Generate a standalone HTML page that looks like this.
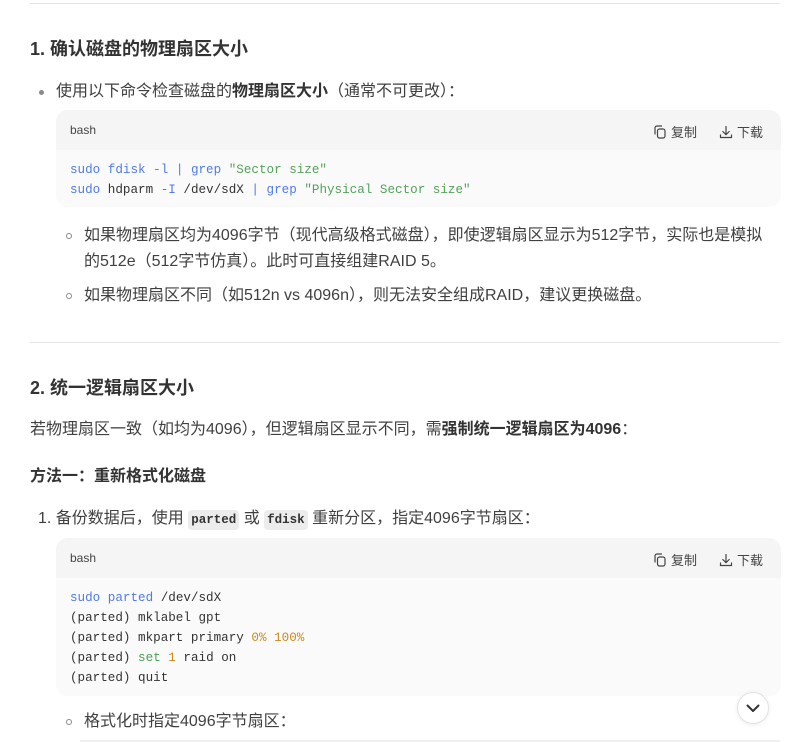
<!DOCTYPE html>
<html><head><meta charset="utf-8"><style>
*{margin:0;padding:0;box-sizing:border-box}
body{width:792px;height:742px;overflow:hidden;background:#fff;font-family:"Liberation Sans","Noto Sans CJK SC",sans-serif;color:#404040;font-size:16px;position:relative}
.a{position:absolute;white-space:nowrap;line-height:20px}
.hr{position:absolute;left:30px;width:750px;height:1px;background:#e5e5e5}
h3{position:absolute;left:30px;font-size:18px;font-weight:bold;color:#333;line-height:24px;white-space:nowrap}
b{font-weight:bold;color:#333}
.dot{position:absolute;width:5px;height:5px;border-radius:50%;background:#8a8a8a}
.circ{position:absolute;width:6px;height:6px;border-radius:50%;border:1px solid #888}
.cb{position:absolute;left:56px;width:725px;border-radius:12px;overflow:hidden;background:#fafafa}
.ch{height:40px;background:#f5f5f5;position:relative;font-size:12px;color:#444}
.ch .l{position:absolute;left:14px;top:13px}
.ch .r{position:absolute;right:18px;top:12px;font-size:13px;color:#444;display:flex;align-items:center;gap:4px}
.cd{font-family:"Liberation Mono",monospace;font-size:12.6px;line-height:20px;padding:10px 14px;color:#333;white-space:pre}
.k{color:#4f7be8}.s{color:#55a15a}.n{color:#c98a1e}.g{color:#4a9e54}
code{font-family:"Liberation Mono",monospace;font-weight:bold;background:#ececec;border-radius:4px;padding:3px 3px;font-size:12.5px;color:#333}
</style></head><body>
<div class="hr" style="top:3px"></div>
<h3 style="top:37px">1. 确认磁盘的物理扇区大小</h3>
<div class="dot" style="left:39px;top:90px"></div>
<div class="a" style="left:56px;top:82px">使用以下命令检查磁盘的<b>物理扇区大小</b>（通常不可更改）：</div>
<div class="cb" style="top:110px;height:97px">
<div class="ch"><span class="l">bash</span><span class="r"><svg width="14" height="14" viewBox="0 0 14 14" fill="none" stroke="#444" stroke-width="1.2"><rect x="4.5" y="4" width="7.5" height="9" rx="2"/><path d="M2 9.5V3a2 2 0 0 1 2-2h5"/></svg>复制<span style="width:14px"></span><svg width="14" height="14" viewBox="0 0 14 14" fill="none" stroke="#444" stroke-width="1.2" stroke-linecap="round"><path d="M7 1.5v8M3.8 6.5 7 9.7l3.2-3.2M1.5 10v2.5h11V10"/></svg>下载</span></div>
<div class="cd"><span class="k">sudo fdisk -l</span> <span class="k">|</span> <span class="k">grep</span> <span class="s">"Sector size"</span>
<span class="k">sudo</span> hdparm <span class="k">-I</span> /dev/sdX <span class="k">|</span> <span class="k">grep</span> <span class="s">"Physical Sector size"</span></div>
</div>
<div class="circ" style="left:66px;top:233px"></div>
<div class="a" style="left:84px;top:226px">如果物理扇区均为4096字节（现代高级格式磁盘），即使逻辑扇区显示为512字节，实际也是模拟</div>
<div class="a" style="left:84px;top:252px">的512e（512字节仿真）。此时可直接组建RAID 5。</div>
<div class="circ" style="left:66px;top:293px"></div>
<div class="a" style="left:84px;top:286px">如果物理扇区不同（如512n vs 4096n），则无法安全组成RAID，建议更换磁盘。</div>
<div class="hr" style="top:342px"></div>
<h3 style="top:376px">2. 统一逻辑扇区大小</h3>
<div class="a" style="left:30px;top:420px">若物理扇区一致（如均为4096），但逻辑扇区显示不同，需<b>强制统一逻辑扇区为4096</b>：</div>
<div class="a" style="left:30px;top:467px;font-weight:bold;color:#333">方法一：重新格式化磁盘</div>
<div class="a" style="left:38px;top:509px">1. 备份数据后，使用 <code>parted</code> 或 <code>fdisk</code> 重新分区，指定4096字节扇区：</div>
<div class="cb" style="top:538px;height:158px">
<div class="ch"><span class="l">bash</span><span class="r"><svg width="14" height="14" viewBox="0 0 14 14" fill="none" stroke="#444" stroke-width="1.2"><rect x="4.5" y="4" width="7.5" height="9" rx="2"/><path d="M2 9.5V3a2 2 0 0 1 2-2h5"/></svg>复制<span style="width:14px"></span><svg width="14" height="14" viewBox="0 0 14 14" fill="none" stroke="#444" stroke-width="1.2" stroke-linecap="round"><path d="M7 1.5v8M3.8 6.5 7 9.7l3.2-3.2M1.5 10v2.5h11V10"/></svg>下载</span></div>
<div class="cd"><span class="k">sudo parted</span> /dev/sdX
(parted) mklabel gpt
(parted) mkpart primary <span class="n">0%</span> <span class="n">100%</span>
(parted) <span class="g">set</span> <span class="n">1</span> raid on
(parted) quit</div>
</div>
<div class="circ" style="left:66px;top:719px"></div>
<div class="a" style="left:84px;top:712px">格式化时指定4096字节扇区：</div>
<div style="position:absolute;left:80px;top:740px;width:700px;height:2px;background:#f0f0f0"></div>
<div style="position:absolute;left:737px;top:692px;width:32px;height:32px;border-radius:50%;background:#fff;border:1px solid #e3e3e3;box-shadow:0 1px 4px rgba(0,0,0,.08)">
<svg width="32" height="32" viewBox="0 0 32 32" style="position:absolute;left:-1px;top:-1px"><path d="M10.5 13.5 L16 19 L21.5 13.5" fill="none" stroke="#333" stroke-width="2" stroke-linecap="round" stroke-linejoin="round"/></svg></div>
</body></html>
